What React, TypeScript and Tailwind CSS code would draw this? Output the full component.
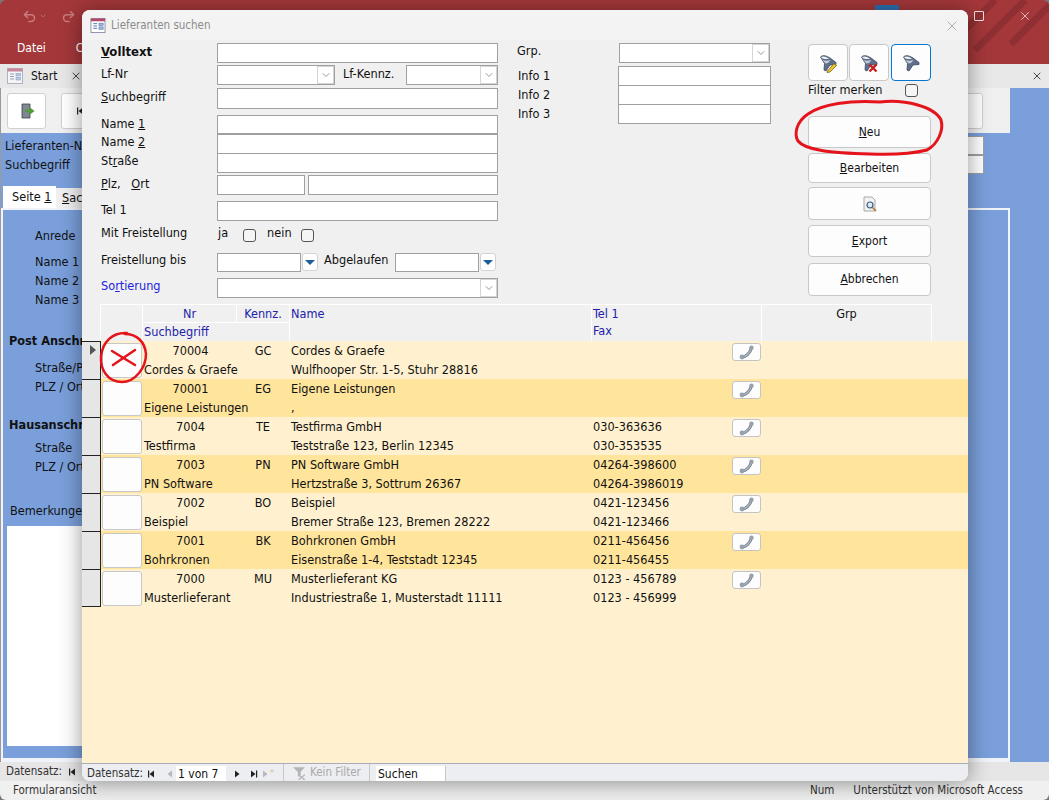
import React from 'react';
import { ChevronDown, Undo2, Redo2, X } from 'lucide-react';

const font = 'font-["DejaVu_Sans_Condensed","DejaVu_Sans",sans-serif]';

const rows = [
  { nr: '70004', k: 'GC', such: 'Cordes & Graefe', name: 'Cordes & Graefe', adr: 'Wulfhooper Str. 1-5, Stuhr 28816', tel: '', fax: '' },
  { nr: '70001', k: 'EG', such: 'Eigene Leistungen', name: 'Eigene Leistungen', adr: ',', tel: '', fax: '' },
  { nr: '7004', k: 'TE', such: 'Testfirma', name: 'Testfirma GmbH', adr: 'Teststraße 123, Berlin 12345', tel: '030-363636', fax: '030-353535' },
  { nr: '7003', k: 'PN', such: 'PN Software', name: 'PN Software GmbH', adr: 'Hertzstraße 3, Sottrum 26367', tel: '04264-398600', fax: '04264-3986019' },
  { nr: '7002', k: 'BO', such: 'Beispiel', name: 'Beispiel', adr: 'Bremer Straße 123, Bremen 28222', tel: '0421-123456', fax: '0421-123466' },
  { nr: '7001', k: 'BK', such: 'Bohrkronen', name: 'Bohrkronen GmbH', adr: 'Eisenstraße 1-4, Teststadt 12345', tel: '0211-456456', fax: '0211-456455' },
  { nr: '7000', k: 'MU', such: 'Musterlieferant', name: 'Musterlieferant KG', adr: 'Industriestraße 1, Musterstadt 11111', tel: '0123 - 456789', fax: '0123 - 456999' },
];

const FormIcon = ({ className = '' }: { className?: string }) => (
  <svg viewBox="0 0 16 16" className={className}>
    <rect x="0.5" y="0.5" width="15" height="15" fill="#fff" stroke="#8a8fa8" />
    <rect x="0.5" y="0.5" width="15" height="3" fill="#b5476a" />
    <path d="M3 6h4M3 8.5h4M3 11h4" stroke="#4a6fa5" />
    <rect x="9" y="5.5" width="4.5" height="2.5" fill="#9fb9dd" stroke="#4a6fa5" strokeWidth="0.6" />
    <rect x="9" y="9.5" width="4.5" height="2.5" fill="#9fb9dd" stroke="#4a6fa5" strokeWidth="0.6" />
  </svg>
);

const Funnel = ({ mark }: { mark?: 'pen' | 'x' }) => (
  <svg viewBox="0 0 20 20" className="h-5 w-5">
    <path d="M2.5 4 C5 1.5 9 3 12 5 L18 9.5 L18 11.5 L12 12 L8 18 L6 17 L6.5 10.5 Z" fill="#5f6f8c" stroke="#39465e" strokeWidth="0.8" />
    <path d="M3 4.5 C5 2.5 8.5 3.8 11 5.8 C8 6.2 5 6 3 4.5 Z" fill="#eef1f5" />
    <path d="M4 6.5 C6 8 9 8 12.5 7 L10 10 L7.5 10.5 Z" fill="#c3ccd8" />
    {mark === 'pen' && <path d="M9.5 18 L16 10.5 L18.5 12.5 L12 19 L9 19.5 Z" fill="#f2c52e" stroke="#6b5010" strokeWidth="0.7" />}
    {mark === 'x' && <path d="M10.5 11.5 L17.5 18.5 M17.5 11.5 L10.5 18.5" stroke="#c81e1e" strokeWidth="2.4" />}
  </svg>
);

const Phone = () => (
  <div className="flex h-[18px] w-[29px] items-center justify-center rounded-[3px] border border-[#c4c4c4] bg-[#fdfdfd]">
    <svg viewBox="0 0 16 15" className="h-[15px] w-4">
      <path d="M3 12 C7 12 11 8 12.5 3" fill="none" stroke="#76808c" strokeWidth="3" />
      <path d="M3 12 C7 12 11 8 12.5 3" fill="none" stroke="#a9b3bd" strokeWidth="1.4" />
      <circle cx="3" cy="12" r="2.4" fill="#97a1ac" />
      <circle cx="12.5" cy="2.8" r="2.2" fill="#97a1ac" />
    </svg>
  </div>
);

const Input = ({ w, h = 'h-5', className = '' }: { w: string; h?: string; className?: string }) => (
  <div className={`${w} ${h} shrink-0 border border-[#a0a0a0] bg-white ${className}`} />
);

const Combo = ({ w, h = 'h-5' }: { w: string; h?: string }) => (
  <div className={`${w} ${h} flex shrink-0 justify-end border border-[#a0a0a0] bg-white`}>
    <div className="flex w-[17px] items-center justify-center border border-[#d4d4d4]">
      <ChevronDown className="h-3 w-3 text-[#555]" strokeWidth={1.2} />
    </div>
  </div>
);

const Check = ({ className = '' }: { className?: string }) => (
  <div className={`h-[13px] w-[13px] shrink-0 rounded-[3px] border border-[#555] bg-[#f5f5f5] ${className}`} />
);

const DateBtn = () => (
  <div className="ml-px flex h-[18px] w-4 shrink-0 items-center justify-center rounded-[3px] border border-[#d4d4d4] bg-white">
    <div className="h-0 w-0 border-x-[5px] border-t-[5px] border-x-transparent border-t-[#1d5f9a]" />
  </div>
);

const Btn = ({ children, h = 'h-8' }: { children: React.ReactNode; h?: string }) => (
  <div className={`${h} flex w-[123px] items-center justify-center rounded-[4px] border border-[#c8c8c8] bg-[#fdfdfd] text-[12px] text-[#111]`}>
    {children}
  </div>
);

const Field = ({ label, children, h = 'h-5', pb = 'pb-[3px]', className = '' }: { label: React.ReactNode; children?: React.ReactNode; h?: string; pb?: string; className?: string }) => (
  <div className={`flex ${h} items-center ${className}`}>
    <div className={`w-[116px] shrink-0 ${pb} leading-none`}>{label}</div>
    {children}
  </div>
);

// little arrows of the record navigator
const Nav = ({ d, off, bar }: { d: 'l' | 'r'; off?: boolean; bar?: boolean }) => (
  <svg viewBox="0 0 10 10" className="h-[10px] w-[10px]" fill={off ? '#b8b8b8' : '#222'}>
    <path d={d === 'l' ? 'M7 1.5 L7 8.5 L2.5 5 Z' : 'M3 1.5 L3 8.5 L7.5 5 Z'} />
    {bar && <rect x={d === 'l' ? 1 : 8} y="1.5" width="1.2" height="7" />}
  </svg>
);

const Bg = () => (
  <div className="flex h-full w-full flex-col overflow-hidden rounded-[6px]">
    <div className="relative flex h-16 shrink-0 flex-col bg-[#a4373a] px-[17px] text-white">
      <svg viewBox="0 0 100 64" className="absolute right-0 top-0 h-16 w-[100px]" stroke="#8f2f33" strokeWidth="7">
        <path d="M0 46 L46 0 M26 50 L76 0 M62 44 L106 0" />
      </svg>
      <div className="absolute left-[875px] top-[5px] h-[5px] w-[24px] bg-[#2c6fb0]" />
      <div className="relative flex h-[32px] items-center pl-[5px] text-[#c97a7c]">
        <Undo2 className="h-[15px] w-[15px]" strokeWidth={2.4} />
        <ChevronDown className="ml-[2px] h-2 w-2" />
        <Redo2 className="ml-[14px] h-[15px] w-[15px]" strokeWidth={2.4} />
        <div className="ml-auto flex items-center gap-[34px] text-[#f3dede]">
          <div className="h-[10px] w-[10px] rounded-[1px] border border-[#f3dede]" />
          <X className="h-3.5 w-3.5" strokeWidth={1.3} />
        </div>
      </div>
      <div className="relative flex items-center gap-[30px] pt-[7px] text-[12px]">
        <span>Datei</span>
        <span>C</span>
      </div>
    </div>
    <div className="flex h-[24px] shrink-0 items-center bg-[#e8e8e8] pl-[7px] text-[12px]">
      <FormIcon className="h-[16px] w-[16px] opacity-60" />
      <span className="ml-[8px]">Start</span>
      <X className="ml-[13px] h-3 w-3" strokeWidth={1.5} />
      <X className="ml-auto mr-[6px] h-3 w-3" strokeWidth={1.5} />
    </div>
    <div className="flex min-h-0 flex-1">
      <div className="flex w-[1010px] shrink-0 flex-col border-l border-[#9a9a9a] bg-[#7a9fdb]">
        <div className="flex h-[45px] shrink-0 items-center bg-[#f0f0f0] pl-[6px]">
          <div className="flex h-[36px] w-[39px] items-center justify-center rounded-[3px] border border-[#d0d0d0] bg-white">
            <svg viewBox="0 0 16 16" className="h-4 w-4">
              <path d="M3 1h8v14H3z" fill="#7f8790" stroke="#3b4148" strokeWidth="0.8" />
              <path d="M6 8h8M10 5l4 3-4 3" fill="none" stroke="#4f9d3a" strokeWidth="2" />
            </svg>
          </div>
          <div className="ml-[15px] flex h-[36px] w-[39px] items-center justify-center rounded-[3px] border border-[#d0d0d0] bg-white">
            <Nav d="l" bar />
          </div>
          <div className="ml-auto mr-[27px] h-[36px] w-[40px] rounded-[3px] border border-[#d0d0d0] bg-white" />
        </div>
        <div className="flex shrink-0 flex-col pl-[4px] pt-[3px] text-[12.6px] leading-[19px] text-[#111]">
          <div className="flex h-[19px] justify-between pr-[26px]">
            <span>Lieferanten-Nr</span>
            <div className="h-[19px] w-[60px] border border-[#a0a0a0] bg-white" />
          </div>
          <div className="flex h-[19px] justify-between pr-[26px]">
            <span>Suchbegriff</span>
            <div className="h-[19px] w-[60px] border border-[#a0a0a0] bg-white" />
          </div>
        </div>
        <div className="mt-[12px] flex h-[22px] shrink-0 items-end pl-[2px] text-[12.6px]">
          <div className="flex h-[22px] w-[53px] items-center bg-white pl-[9px]">Seite&nbsp;<u>1</u></div>
          <div className="flex h-[20px] w-[40px] items-center bg-[#f0f0f0] pl-[6px]"><u>S</u>ach</div>
        </div>
        <div className="flex-1 border-x-2 border-b-[4px] border-t-2 border-[#f0f4fa] pl-[32px] pt-[18px] text-[12.6px] leading-4 text-[#111]">
          <div className="h-[26px]">Anrede</div>
          <div className="h-[19px]">Name 1</div>
          <div className="h-[19px]">Name 2</div>
          <div className="h-[41px]">Name 3</div>
          <div className="-ml-[26px] h-[27px] font-bold">Post Anschr</div>
          <div className="h-[19px]">Straße/Po</div>
          <div className="h-[38px]">PLZ / Ort</div>
          <div className="-ml-[26px] h-[23px] font-bold">Hausanschr</div>
          <div className="h-[19px]">Straße</div>
          <div className="h-[44px]">PLZ / Ort</div>
          <div className="-ml-[25px] h-[23px]">Bemerkungen</div>
          <div className="-ml-[28px] h-[220px] w-[75px] bg-white" />
        </div>
      </div>
      <div className="flex-1 bg-[#7a9fdb]" />
    </div>
    <div className="flex h-[19px] shrink-0 items-center gap-[6px] bg-[#e6e6e6] pl-[6px] text-[11.5px] text-[#333]">
      <span>Datensatz:</span>
      <Nav d="l" bar />
    </div>
    <div className="flex h-[19px] shrink-0 items-center bg-[#f0f0f0] pl-[13px] pr-[26px] text-[11.5px] text-[#333]">
      <span>Formularansicht</span>
      <span className="ml-auto">Num</span>
      <span className="ml-[19px]">Unterstützt von Microsoft Access</span>
    </div>
  </div>
);

export default function App() {
  return (
    <div className={`relative h-[800px] w-[1049px] overflow-hidden bg-[#777] text-[12.6px] text-[#111] ${font}`}>
      <Bg />
      {/* dialog */}
      <div className="absolute left-[82px] top-[10px] flex h-[771px] w-[886px] flex-col overflow-hidden rounded-[8px] bg-[#f0f0f0] shadow-[0_2px_22px_rgba(0,0,0,0.42)]">
        <div className="flex h-[30px] shrink-0 items-center bg-[#f3f3f3] pl-[8px] pr-[8px] pt-[1px] text-[#8c8c8c]">
          <FormIcon className="h-[15px] w-[16px]" />
          <span className="ml-[5px] text-[11.5px]">Lieferanten suchen</span>
          <X className="ml-auto h-4 w-4 text-[#999]" strokeWidth={1.2} />
        </div>

        <div className="flex h-[264px] shrink-0">
          {/* left form */}
          <div className="ml-[19px] w-[416px] pt-[3px]">
            <Field label={<b className="text-[13px]"><u>V</u>olltext</b>}><Input w="w-[281px]" /></Field>
            <div className="mt-[2px] flex h-5 items-center">
              <div className="w-[116px] pb-[1px] leading-none">Lf-Nr</div>
              <Combo w="w-[118px]" />
              <span className="ml-2 w-[63px] pb-[1px] leading-none">Lf-Kennz.</span>
              <Combo w="w-[92px]" />
            </div>
            <Field label={<><u>S</u>uchbegriff</>} h="h-[21px]" className="mt-[3px]"><Input w="w-[281px]" h="h-[21px]" /></Field>
            <Field label={<>Name <u>1</u></>} h="h-[19px]" pb="pb-[1px]" className="mt-[6px]"><Input w="w-[281px]" h="h-[19px]" /></Field>
            <Field label={<>Name <u>2</u></>} h="h-[19px]"><Input w="w-[281px]" h="h-[20px]" /></Field>
            <Field label={<>St<u>r</u>aße</>} h="h-[19px]"><Input w="w-[281px]" h="h-[20px]" /></Field>
            <Field label={<><u>P</u>lz,&nbsp;&nbsp;&nbsp;<u>O</u>rt</>} pb="pb-[1px]" className="mt-[3px]">
              <Input w="w-[88px]" />
              <Input w="w-[190px]" className="ml-[3px]" />
            </Field>
            <Field label="Tel 1" pb="pb-[1px]" className="mt-[6px]"><Input w="w-[281px]" /></Field>
            <div className="mt-[4px] flex h-5 items-center">
              <div className="w-[116px] pb-[3px] leading-none">Mit Freistellung</div>
              <span className="ml-px pb-[4px] leading-none">ja</span>
              <Check className="ml-[15px]" />
              <span className="ml-[11px] pb-[4px] leading-none">nein</span>
              <Check className="ml-[9px]" />
            </div>
            <div className="mt-[7px] flex h-5 items-center">
              <div className="w-[116px] pb-[3px] leading-none">Freistellung bis</div>
              <Input w="w-[84px]" h="h-[19px]" />
              <DateBtn />
              <span className="ml-[6px] w-[71px] pb-[3px] leading-none">Abgelaufen</span>
              <Input w="w-[84px]" h="h-[19px]" />
              <DateBtn />
            </div>
            <Field label={<span className="text-[#2222dd]">So<u>r</u>tierung</span>} className="mt-[6px]"><Combo w="w-[281px]" /></Field>
          </div>

          {/* middle */}
          <div className="w-[272px] pt-[3px]">
            <div className="flex h-5 items-center">
              <span className="w-[102px] pb-[3px] leading-none">Grp.</span>
              <Combo w="w-[151px]" />
            </div>
            <div className="mt-[3px] flex">
              <div className="w-[101px] pl-[1px] leading-[19px]">
                <div>Info 1</div>
                <div>Info 2</div>
                <div>Info 3</div>
              </div>
              <div className="flex flex-col">
                <Input w="w-[153px]" h="h-5" />
                <Input w="w-[153px]" h="h-5" className="-mt-px" />
                <Input w="w-[153px]" h="h-5" className="-mt-px" />
              </div>
            </div>
          </div>

          {/* right buttons */}
          <div className="ml-[19px] w-[123px] pt-[4px]">
            <div className="flex">
              <div className="flex h-[37px] w-[40px] items-center justify-center rounded-[4px] border border-[#c8c8c8] bg-[#fdfdfd]"><Funnel mark="pen" /></div>
              <div className="ml-px flex h-[37px] w-[40px] items-center justify-center rounded-[4px] border border-[#c8c8c8] bg-[#fdfdfd]"><Funnel mark="x" /></div>
              <div className="ml-[2px] flex h-[37px] w-[40px] items-center justify-center rounded-[4px] border border-[#0078d4] bg-[#fdfdfd]"><Funnel /></div>
            </div>
            <div className="mt-[1px] flex h-[16px] items-center justify-between pr-[13px]">
              <span>Filter merken</span>
              <Check />
            </div>
            <div className="mt-[18px] flex flex-col">
              <Btn h="h-8"><span><u>N</u>eu</span></Btn>
              <div className="mt-[5px]"><Btn h="h-[30px]"><span><u>B</u>earbeiten</span></Btn></div>
              <div className="mt-1">
                <Btn h="h-[33px]">
                  <svg viewBox="0 0 16 16" className="h-[16px] w-[16px]">
                    <path d="M2 1h8l3 3v11H2z" fill="#f2f2f2" stroke="#a8a8a8" />
                    <circle cx="8" cy="9" r="3" fill="#dcebf7" stroke="#3e5a78" strokeWidth="1.2" />
                    <path d="M10.5 11.5L14 15" stroke="#b07a30" strokeWidth="1.6" />
                  </svg>
                </Btn>
              </div>
              <div className="mt-[5px]"><Btn h="h-8"><span><u>E</u>xport</span></Btn></div>
              <div className="mt-[6px]"><Btn h="h-[33px]"><span className="pb-[2px]"><u>A</u>bbrechen</span></Btn></div>
            </div>
          </div>
        </div>

        {/* list header */}
        <div className="ml-[18px] grid h-[37px] w-[832px] shrink-0 grid-cols-[41px_93px_52px_301px_169px_169px] grid-rows-[17px_18px] gap-px border-x border-t border-white bg-white text-[#2222aa]">
          <div className="row-span-2 bg-[#f0f0f0]" />
          <div className="bg-[#f0f0f0] text-center leading-[17px]">Nr</div>
          <div className="bg-[#f0f0f0] text-center leading-[17px]">Kennz.</div>
          <div className="row-span-2 bg-[#f0f0f0] pl-[1px] leading-[17px]">Name</div>
          <div className="row-span-2 bg-[#f0f0f0] pl-[1px] leading-[17px]">
            <div>Tel 1</div>
            <div>Fax</div>
          </div>
          <div className="row-span-2 bg-[#f0f0f0] text-center leading-[17px] text-[#111]">Grp</div>
          <div className="col-span-2 bg-[#f0f0f0] pl-[1px] leading-[17px]">Suchbegriff</div>
        </div>

        {/* rows */}
        <div className="flex min-h-0 flex-1 flex-col bg-[#fff1cf]">
          {rows.map((r, i) => (
            <div key={r.nr} className={`flex h-[38px] shrink-0 ${i % 2 ? 'bg-[#ffe49c]' : 'bg-[#fff1cf]'}`}>
              <div className={`w-[19px] shrink-0 border-r border-t border-[#222] bg-[#e6e6e6] pl-[8px] pt-[3px] ${i === rows.length - 1 ? 'border-b' : ''}`}>
                {i === 0 && <div className="h-0 w-0 border-y-[5px] border-l-[6px] border-y-transparent border-l-[#555]" />}
              </div>
              <div className="ml-[1px] mt-[2px] h-[35px] w-[40px] shrink-0 rounded-[3px] border border-[#c8c8c8] bg-[#fdfdfd]" />
              <div className="ml-[2px] w-[146px] shrink-0 pt-px">
                <div className="flex h-[19px] items-center">
                  <span className="w-[93px] text-center">{r.nr}</span>
                  <span className="w-[52px] text-center">{r.k}</span>
                </div>
                <div className="flex h-[18px] items-center whitespace-nowrap pt-px">{r.such}</div>
              </div>
              <div className="ml-[1px] w-[302px] shrink-0 pt-px">
                <div className="flex h-[19px] items-center">{r.name}</div>
                <div className="flex h-[18px] items-center pt-px">{r.adr}</div>
              </div>
              <div className="w-[139px] shrink-0 pt-px">
                <div className="flex h-[19px] items-center">{r.tel}</div>
                <div className="flex h-[18px] items-center pt-px">{r.fax}</div>
              </div>
              <div className="pt-[2px]"><Phone /></div>
            </div>
          ))}
        </div>

        {/* nav bar */}
        <div className="flex h-[18px] shrink-0 items-end border-t border-[#a9adb8] bg-[#eceef1] text-[11.5px] text-[#333]">
          <span className="ml-[5px] flex h-[15px] w-[60px] items-center">Datensatz:</span>
          <div className="flex h-[15px] w-[18px] items-center"><Nav d="l" bar /></div>
          <div className="flex h-[15px] w-[11px] items-center"><Nav d="l" off /></div>
          <div className="flex h-[15px] w-[50px] items-center bg-white pl-[2px] text-[12px] text-[#111]">1 von 7</div>
          <div className="ml-[6px] flex h-[15px] w-4 items-center"><Nav d="r" /></div>
          <div className="flex h-[15px] w-[12px] items-center"><Nav d="r" bar /></div>
          <div className="flex h-[15px] w-[23px] items-center text-[9px] text-[#d8c48a]"><Nav d="r" off />*</div>
          <div className="flex h-full w-[87px] items-center gap-[3px] border-x border-[#c8c8c8] pl-[8px] text-[#aaa]">
            <svg viewBox="0 0 14 14" className="h-[15px] w-[15px]">
              <path d="M1 2h11L8 6.5V10L5.5 11V6.5Z" fill="#b4b4b4" />
              <path d="M6 9l6 5M12 9l-6 5" stroke="#b4b4b4" strokeWidth="1.2" />
            </svg>
            Kein Filter
          </div>
          <div className="ml-[6px] flex h-[15px] w-[70px] items-center border-r border-[#c8c8c8] bg-white pl-[2px] text-[12px] text-[#111]">Suchen</div>
        </div>
      </div>

      {/* red pen marks */}
      <svg viewBox="0 0 1049 800" className="pointer-events-none absolute inset-0 h-[800px] w-[1049px]" fill="none" stroke="#e5141c" strokeWidth="3" strokeLinecap="round">
        <path d="M880 102 C850 100 822 104 808 114 C796 122 794 134 798 141 C805 150 830 153 870 154 C895 155 915 153 927 150 C938 144 944 130 941 120 C935 107 905 99 880 102" />
        <path d="M127 333 C112 332 103 342 101 356 C100 370 108 382 122 382 C135 382 146 368 146 354 C145 342 137 334 125 334" strokeWidth="2.5" />
        <path d="M112 351 L135 365 M135 350 L113 365" strokeWidth="2.5" />
      </svg>
    </div>
  );
}
